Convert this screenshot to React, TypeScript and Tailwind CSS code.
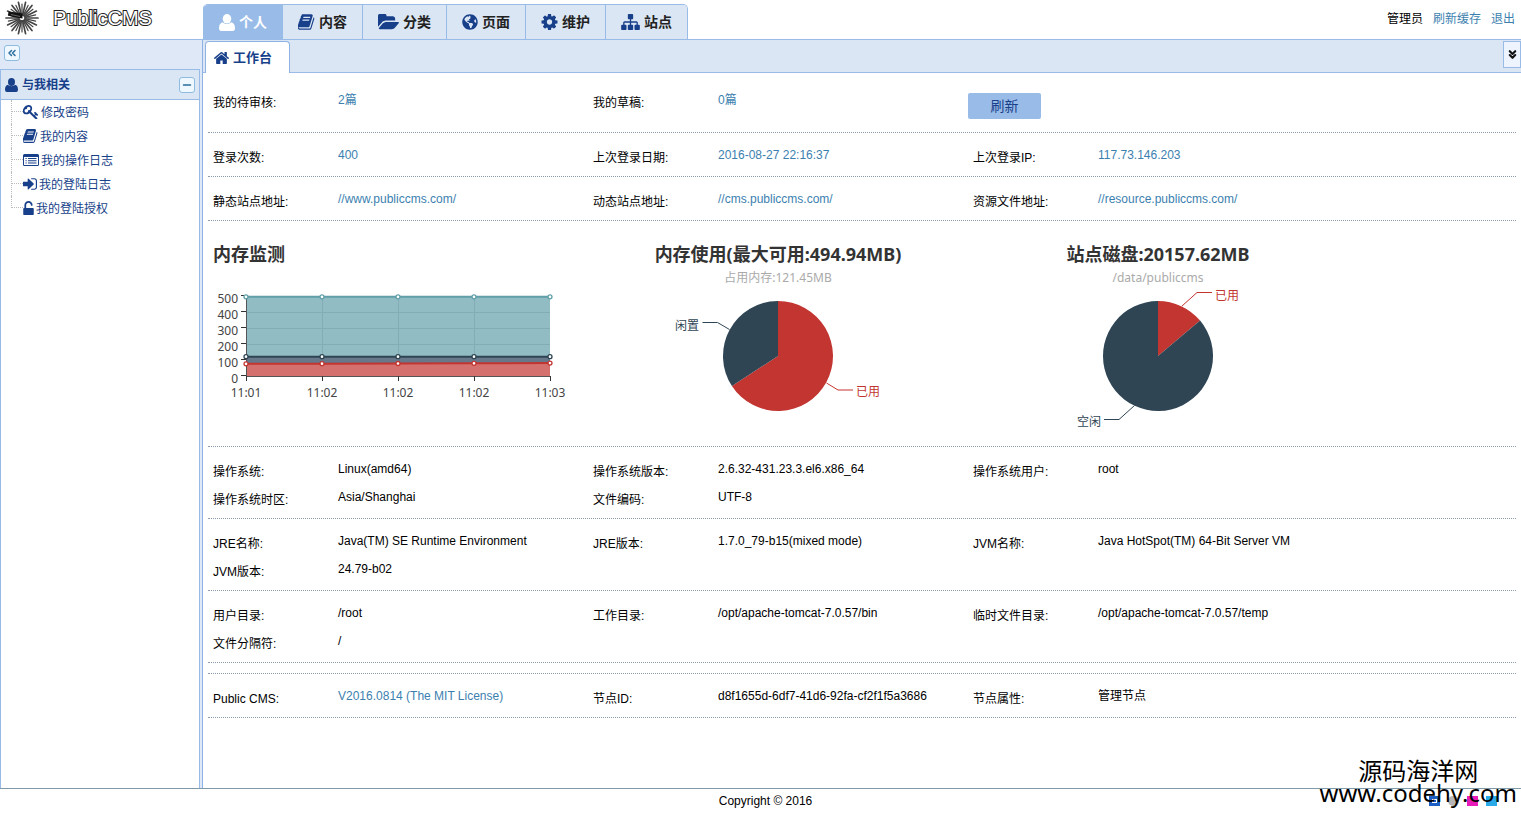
import type { ReactNode } from "react";
import { ChevronsDown, ChevronsLeft, Minus } from "lucide-react";
import { FaGlobeAmericas } from "react-icons/fa";
import clsx from "clsx";

type IconProps = { className?: string };

function Glyph({ box, className, children }: { box: string; className?: string; children: ReactNode }) {
  return (
    <svg viewBox={box} fill="currentColor" className={clsx("shrink-0", className)} aria-hidden="true">
      {children}
    </svg>
  );
}

const UserIcon = ({ className }: IconProps) => (
  <Glyph box="0 0 16 17" className={className}>
    <ellipse cx="8" cy="4.800" rx="4.300" ry="4.800" />
    <path d="M3.800 8.200C1.200 8.800 0 10.800 0 14.300Q0 17 2.300 17h11.400Q16 17 16 14.300C16 10.800 14.800 8.800 12.200 8.200 10.500 10.600 5.500 10.600 3.800 8.200z" />
  </Glyph>
);

const BookIcon = ({ className }: IconProps) => (
  <Glyph box="64 128 1664 1536" className={className}>
    <path d="M1639 478q40 57 18 129l-275 906q-19 64-76.500 107.500t-122.500 43.500h-923q-77 0-148.500-53.500t-99.500-131.500q-24-67-2-127 0-4 3-27t4-37q1-8-3-21.500t-3-19.500q2-11 8-21t16.500-23.500 16.500-23.500q23-38 45-91.500t30-91.500q3-10 .5-30t-.5-28q3-11 17-28t17-23q21-36 42-92t25-90q1-9-2.500-32t.5-28q4-13 22-30.500t22-22.500q19-26 42.500-84.500t27.500-96.500q1-8-3-25.500t-2-26.500q2-8 9-18t18-23 17-21q8-12 16.500-30.500t15-35 16-36 19.500-32 26.500-23.500 36-11.500 47.500 5.500l-1 3q38-9 51-9h761q74 0 114 56t18 130l-274 906q-36 119-71.500 153.500t-128.500 34.500h-869q-27 0-38 15-11 16-1 43 24 70 144 70h923q29 0 56-15.500t35-41.500l300-987q7-22 5-57 38 15 59 43zm-1064 2q-4 13 2 22.500t20 9.500h608q13 0 25.500-9.500t16.500-22.500l21-64q4-13-2-22.500t-20-9.500h-608q-13 0-25.500 9.500t-16.500 22.500zm-83 256q-4 13 2 22.500t20 9.500h608q13 0 25.500-9.500t16.500-22.500l21-64q4-13-2-22.500t-20-9.500h-608q-13 0-25.500 9.500t-16.500 22.500z" />
  </Glyph>
);

const FolderIcon = ({ className }: IconProps) => (
  <Glyph box="0 256 1880 1280" className={className}>
    <path d="M1879 952q0 31-31 66l-336 396q-43 51-120.500 86.500t-143.500 35.500h-1088q-34 0-60.500-13t-26.500-43q0-31 31-66l336-396q43-51 120.500-86.500t143.500-35.500h1088q34 0 60.500 13t26.500 43zm-343-344v160h-832q-94 0-197 47.500t-164 119.500l-337 396-5 6q0-4-.5-12.500t-.5-12.500v-960q0-92 66-158t158-66h320q92 0 158 66t66 158v32h544q92 0 158 66t66 158z" />
  </Glyph>
);

const GearIcon = ({ className }: IconProps) => (
  <Glyph box="128 128 1536 1536" className={className}>
    <path d="M1152 896q0-106-75-181t-181-75-181 75-75 181 75 181 181 75 181-75 75-181zm512-109v222q0 12-8 23t-20 13l-185 28q-19 54-39 91 35 50 107 138 10 12 10 25t-9 23q-27 37-99 108t-94 71q-12 0-26-9l-138-108q-44 23-91 38-16 136-29 186-7 28-36 28h-222q-14 0-24.500-8.500t-11.500-21.500l-28-184q-49-16-90-37l-141 107q-10 9-25 9-14 0-25-11-126-114-165-168-7-10-7-23 0-12 8-23 15-21 51-66.500t54-70.500q-27-50-41-99l-183-27q-13-2-21-12.500t-8-23.500v-222q0-12 8-23t19-13l186-28q14-46 39-92-40-57-107-138-10-12-10-24 0-10 9-23 26-36 98.500-107.500t94.500-71.500q13 0 26 10l138 107q44-23 91-38 16-136 29-186 7-28 36-28h222q14 0 24.500 8.500t11.500 21.500l28 184q49 16 90 37l142-107q9-9 24-9 13 0 25 10 129 119 165 170 7 8 7 22 0 12-8 23-15 21-51 66.500t-54 70.500q26 50 41 98l183 28q13 2 21 12.500t8 23.500z" />
  </Glyph>
);

const SitemapIcon = ({ className }: IconProps) => (
  <Glyph box="0 128 1792 1536" className={className}>
    <path d="M1792 1248v320q0 40-28 68t-68 28h-320q-40 0-68-28t-28-68v-320q0-40 28-68t68-28h96v-192h-512v192h96q40 0 68 28t28 68v320q0 40-28 68t-68 28h-320q-40 0-68-28t-28-68v-320q0-40 28-68t68-28h96v-192h-512v192h96q40 0 68 28t28 68v320q0 40-28 68t-68 28h-320q-40 0-68-28t-28-68v-320q0-40 28-68t68-28h96v-192q0-52 38-90t90-38h512v-192h-96q-40 0-68-28t-28-68v-320q0-40 28-68t68-28h320q40 0 68 28t28 68v320q0 40-28 68t-68 28h-96v192h512q52 0 90 38t38 90v192h96q40 0 68 28t28 68z" />
  </Glyph>
);

const HomeIcon = ({ className }: IconProps) => (
  <Glyph box="90 256 1612 1280" className={className}>
    <path d="M1472 992v480q0 26-19 45t-45 19h-384v-384h-256v384h-384q-26 0-45-19t-19-45v-480q0-1 .5-3t.5-3l575-474 575 474q1 2 1 6zm223-69l-62 74q-8 9-21 11h-3q-13 0-21-7l-692-577-692 577q-12 8-24 7-13-2-21-11l-62-74q-8-10-7-23.500t11-21.500l719-599q32-26 76-26t76 26l244 204v-195q0-14 9-23t23-9h192q14 0 23 9t9 23v408l219 182q10 8 11 21.500t-7 23.500z" />
  </Glyph>
);

const KeyIcon = ({ className }: IconProps) => (
  <Glyph box="64 128 1664 1536" className={className}>
    <path d="M832 512q0-80-56-136t-136-56-136 56-56 136q0 42 19 83-41-19-83-19-80 0-136 56t-56 136 56 136 136 56 136-56 56-136q0-42-19-83 41 19 83 19 80 0 136-56t56-136zm851 704q0 17-49 66t-66 49q-9 0-28.500-16t-36.500-33-38.500-40-24.500-26l-96 96 220 220q28 28 28 68 0 42-39 81t-81 39q-40 0-68-28l-671-671q-176 131-365 131-163 0-265.500-102.500t-102.500-265.500q0-160 95-313t248-248 313-95q163 0 265.500 102.500t102.500 265.500q0 189-131 365l355 355 96-96q-3-3-26-24.500t-40-38.500-33-36.500-16-28.500q0-17 49-66t66-49q13 0 23 10 6 6 46 44.500t82 79.500 86.500 86 73 78 28.500 41z" />
  </Glyph>
);

const ListIcon = ({ className }: IconProps) => (
  <Glyph box="0 0 16 12" className={className}>
    <path fillRule="evenodd" d="M1.500 0h13A1.500 1.500 0 0 1 16 1.500v9a1.500 1.500 0 0 1-1.500 1.500h-13A1.500 1.500 0 0 1 0 10.500v-9A1.500 1.500 0 0 1 1.500 0zM1 3v7.500q0 .5.500.5h13q.5 0 .5-.5V3z" />
    <path d="M2.500 4h1.200v1H2.500zM5 4h8.500v1H5zM2.500 6.300h1.200v1H2.500zM5 6.300h8.500v1H5zM2.500 8.600h1.200v1H2.500zM5 8.600h8.500v1H5z" />
  </Glyph>
);

const SignInIcon = ({ className }: IconProps) => (
  <Glyph box="128 256 1536 1280" className={className}>
    <path d="M1312 896q0 26-19 45l-544 544q-19 19-45 19t-45-19-19-45v-288h-448q-26 0-45-19t-19-45v-384q0-26 19-45t45-19h448v-288q0-26 19-45t45-19 45 19l544 544q19 19 19 45zm352-352v704q0 119-84.500 203.500t-203.500 84.500h-320q-13 0-22.500-9.500t-9.500-22.500q0-4-1-20t-.5-26.500 3-23.500 10-19.500 20.500-6.500h320q66 0 113-47t47-113v-704q0-66-47-113t-113-47h-312l-11.500-1-11.500-3-8-5.500-7-9-2-13.500q0-4-1-20t-.5-26.500 3-23.500 10-19.500 20.500-6.500h320q119 0 203.500 84.500t84.500 203.500z" />
  </Glyph>
);

const UnlockIcon = ({ className }: IconProps) => (
  <Glyph box="320 0 1152 1536" className={className}>
    <path d="M1376 768q40 0 68 28t28 68v576q0 40-28 68t-68 28h-960q-40 0-68-28t-28-68v-576q0-40 28-68t68-28h32v-320q0-185 131.500-316.500t316.500-131.500 316.500 131.500 131.500 316.500q0 26-19 45t-45 19h-64q-26 0-45-19t-19-45q0-106-75-181t-181-75-181 75-75 181v320h736z" />
  </Glyph>
);

const NAV_ITEMS = [
  { label: "个人", icon: UserIcon, size: "h-[17px] w-4", active: true },
  { label: "内容", icon: BookIcon, size: "h-4 w-[17px]" },
  { label: "分类", icon: FolderIcon, size: "h-4 w-[21px]" },
  { label: "页面", icon: FaGlobeAmericas, size: "h-4 w-4" },
  { label: "维护", icon: GearIcon, size: "h-4 w-[17px]" },
  { label: "站点", icon: SitemapIcon, size: "h-4 w-[19px]" },
];

const TREE_ITEMS = [
  { label: "修改密码", icon: KeyIcon, size: "h-[14px] w-4" },
  { label: "我的内容", icon: BookIcon, size: "h-[14px] w-[15px]" },
  { label: "我的操作日志", icon: ListIcon, size: "h-3 w-4" },
  { label: "我的登陆日志", icon: SignInIcon, size: "h-3 w-[14px]" },
  { label: "我的登陆授权", icon: UnlockIcon, size: "h-[14px] w-[11px]" },
];

// a ray is drawn between an inner and an outer radius, the outer one alternates
const RAYS = Array.from({ length: 28 }, (_, i) => {
  const a = (i * Math.PI) / 14;
  const r = i % 2 ? 14 : 16;
  return {
    x1: 17 + 3 * Math.cos(a),
    y1: 17 + 3 * Math.sin(a),
    x2: 17 + r * Math.cos(a),
    y2: 17 + r * Math.sin(a),
  };
});

function Logo() {
  return (
    <a href="#" className="flex w-[203px] shrink-0 items-center gap-[14px] pb-1 pl-[5px]">
      <svg viewBox="0 0 34 34" className="h-[34px] w-[34px]" aria-hidden="true">
        {RAYS.map((ray, i) => (
          <line key={i} {...ray} stroke="#444" strokeWidth={i % 2 ? 1.2 : 1.7} strokeLinecap="round" />
        ))}
        <path d="M3.500 10.500l4 0.500 10 1.500v5L8 16l-5-1.500z" fill="#111" />
        <path d="M6 13.500l9 2" stroke="#777" strokeWidth="0.8" />
      </svg>
      <span className="text-[20px] leading-6 text-white [-webkit-text-stroke:2px_#222] [paint-order:stroke_fill]">
        PublicCMS
      </span>
    </a>
  );
}

function Header() {
  return (
    <header className="flex h-[39px] justify-between">
      <div className="flex">
        <Logo />
        <nav className="mt-1 flex overflow-hidden rounded-t-[5px] border-t border-r border-[#99bbe8]">
          {NAV_ITEMS.map(({ label, icon: Icon, size, active }) => (
            <a
              key={label}
              href="#"
              className={clsx(
                "flex items-center gap-1 border-l border-[#99bbe8] px-[15px] text-[14px] font-bold",
                active ? "bg-[#99bbe8] text-white" : "bg-[#dae6f4] text-[#222]",
              )}
            >
              <Icon className={clsx(size, !active && "text-[#183f8a]")} />
              {label}
            </a>
          ))}
        </nav>
      </div>
      <div className="flex items-center gap-[10px] pr-[6px] pb-[2px]">
        <span>管理员</span>
        <a href="#" className="text-[#3c7faf]">刷新缓存</a>
        <a href="#" className="text-[#3c7faf]">退出</a>
      </div>
    </header>
  );
}

function ToolButton({ label, children }: { label: string; children: ReactNode }) {
  return (
    <button
      aria-label={label}
      className="flex h-4 w-4 items-center justify-center rounded-[3px] border border-[#8dbce0] bg-[#eff8ff] text-[#2a6c9c]"
    >
      {children}
    </button>
  );
}

function Sidebar() {
  return (
    <aside className="flex w-[202px] shrink-0 flex-col bg-[#dfe8f6] pr-[2px]">
      <div className="flex h-[29px] items-start pt-[5px] pl-1">
        <ToolButton label="收起">
          <ChevronsLeft className="h-3 w-3" strokeWidth={3} />
        </ToolButton>
      </div>
      <div className="flex flex-1 flex-col border-r border-[#99bbe8] bg-white">
        <h2 className="flex h-[31px] items-center justify-between border-y border-l border-[#99bbe8] bg-[#dae6f4] px-1 font-bold text-[#183f8a]">
          <span className="flex items-center gap-1">
            <UserIcon className="h-[14px] w-[13px]" />
            与我相关
          </span>
          <ToolButton label="折叠">
            <Minus className="h-3 w-3" strokeWidth={3} />
          </ToolButton>
        </h2>
        <ul className="flex-1 border-l border-[#99bbe8] pl-[10px] text-[#183f8a]">
          {TREE_ITEMS.map(({ label, icon: Icon, size }) => (
            <li key={label} className="group flex h-6 items-center">
              <span className="flex h-6 w-3 flex-col border-l border-dotted border-[#bbb] group-last:h-3 group-last:self-start">
                <span className="h-3 border-b border-dotted border-[#bbb]" />
              </span>
              <a href="#" className="flex items-center gap-[2px]">
                <Icon className={size} />
                <span className="pt-[2px]">{label}</span>
              </a>
            </li>
          ))}
        </ul>
      </div>
    </aside>
  );
}

type Entry = { label: string; value: string; link?: boolean };

function Field({ label, value, link }: Entry) {
  return (
    <div className="flex h-7 px-[5px]">
      <dt className="w-[125px] leading-[30px]">{label}:</dt>
      <dd className={clsx("leading-6", link && "text-[#3c7faf]")}>
        {link ? <a href="#">{value}</a> : value}
      </dd>
    </div>
  );
}

function Section({ items, className, children }: { items: Entry[]; className?: string; children?: ReactNode }) {
  return (
    <dl
      className={clsx(
        "grid grid-cols-[380px_380px_1fr] border-b border-dotted border-[#8a9bb0] pt-[10px] pb-[5px]",
        className,
      )}
    >
      {items.map((item) => (
        <Field key={item.label} {...item} />
      ))}
      {children}
    </dl>
  );
}

const SERIES = [
  { line: "#61a0a8", fill: "#91bcc3", values: [494.94, 494.94, 494.94, 494.94, 494.94] },
  { line: "#2f4554", fill: "#66788a", values: [121, 121, 121, 121, 121] },
  { line: "#c23531", fill: "#d4716f", values: [76, 77, 78, 79, 81] },
];
const TIMES = ["11:01", "11:02", "11:02", "11:02", "11:03"];

const toX = (i: number) => 33 + i * 76;
const toY = (v: number) => 88 - v * 0.16;

function MemoryChart() {
  return (
    <svg viewBox="0 0 370 148" className="h-[148px] w-[370px] overflow-visible font-['Noto_Sans'] text-[12px]">
      {SERIES.map(({ fill, values }) => (
        <polygon
          key={fill}
          fill={fill}
          points={`${toX(0)},88 ${values.map((v, i) => `${toX(i)},${toY(v)}`).join(" ")} ${toX(4)},88`}
        />
      ))}
      {[200, 300, 400].map((v) => (
        <line key={v} x1="33" x2="337" y1={toY(v) + 0.5} y2={toY(v) + 0.5} stroke="#83adb5" />
      ))}
      {[1, 2, 3].map((i) => (
        <line key={i} x1={toX(i) + 0.5} x2={toX(i) + 0.5} y1="9" y2="68" stroke="#83adb5" />
      ))}
      <path d="M33.500 8v80.500H337" fill="none" stroke="#555" />
      {[0, 100, 200, 300, 400, 500].map((v) => (
        <g key={v}>
          <line x1="28" x2="33" y1={toY(v) - 0.5} y2={toY(v) - 0.5} stroke="#333" />
          <text x="25" y={toY(v) + 7} textAnchor="end" fill="#444">{v}</text>
        </g>
      ))}
      {TIMES.map((t, i) => (
        <g key={i}>
          <line x1={toX(i) + 0.5} x2={toX(i) + 0.5} y1="88" y2="93" stroke="#333" />
          <text x={toX(i)} y="109" textAnchor="middle" fill="#444">{t}</text>
        </g>
      ))}
      {SERIES.map(({ line, values }) => (
        <g key={line} stroke={line}>
          <polyline fill="none" strokeWidth="2" points={values.map((v, i) => `${toX(i)},${toY(v)}`).join(" ")} />
          {values.map((v, i) => (
            <circle key={i} cx={toX(i)} cy={toY(v)} r="2" fill="#fff" strokeWidth="1.3" />
          ))}
        </g>
      ))}
    </svg>
  );
}

type Slice = { name: string; color: string; path: string; guide: string; x: number; y: number };

const HEAP: Slice[] = [
  { name: "已用", color: "#c23531", path: "M185 68V13A55 55 0 1 1 138.900 98z", guide: "M233.500 95l11.500 7h15", x: 263, y: 108 },
  { name: "闲置", color: "#2f4554", path: "M185 68L138.900 98A55 55 0 0 1 185 13z", guide: "M136.500 41.500l-12-7h-15", x: 82, y: 42 },
];
const DISK: Slice[] = [
  { name: "已用", color: "#c23531", path: "M185 68V13A55 55 0 0 1 227.100 32.600z", guide: "M209 18l15-13.500h15", x: 242, y: 12 },
  { name: "空闲", color: "#2f4554", path: "M185 68L227.100 32.600A55 55 0 1 1 185 13z", guide: "M161.500 117.500l-15.500 14h-15", x: 104, y: 138 },
];

function PieChart({ slices }: { slices: Slice[] }) {
  return (
    <svg viewBox="0 0 370 148" className="h-[148px] w-[370px] text-[12px]">
      {slices.map(({ name, color, path, guide, x, y }) => (
        <g key={name}>
          <path d={path} fill={color} />
          <path d={guide} fill="none" stroke={color} />
          <text x={x} y={y} fill={color}>{name}</text>
        </g>
      ))}
    </svg>
  );
}

function ChartPanel({ title, subtitle, children }: { title: string; subtitle?: string; children: ReactNode }) {
  return (
    <figure className="w-[380px] px-[5px] pt-5">
      <figcaption className={clsx("h-[47px] font-['Noto_Sans','Noto_Sans_CJK_SC',sans-serif]", subtitle && "text-center")}>
        <h3 className="text-[18px] leading-[26px] font-bold text-[#333]">{title}</h3>
        {subtitle && <p className="leading-[22px] text-[#aaa]">{subtitle}</p>}
      </figcaption>
      {children}
    </figure>
  );
}

function Workbench() {
  return (
    <main className="flex min-w-0 flex-1 flex-col border-l border-[#8db2e3]">
      <div className="flex h-[33px] items-start justify-between border-b border-[#99bbe8] bg-[#dae6f4] pl-[2px]">
        <button className="mt-px flex h-8 w-[85px] items-center gap-1 self-start rounded-t-[4px] border border-b-0 border-[#8db2e3] bg-white pl-2 font-bold text-[#183f8a] shadow-[0_1px_0_#fff]">
          <HomeIcon className="h-3 w-[15px]" />
          <span className="text-[13px]">工作台</span>
        </button>
        <button
          aria-label="更多标签"
          className="mt-px flex h-[27px] w-[18px] items-center justify-center border border-[#99bbe8] bg-[#edf4fd] text-[#111]"
        >
          <ChevronsDown className="h-[13px] w-[13px]" strokeWidth={4} />
        </button>
      </div>
      <div className="flex-1 p-[5px]">
        <Section
          items={[
            { label: "我的待审核", value: "2篇", link: true },
            { label: "我的草稿", value: "0篇", link: true },
          ]}
        >
          <div className="pt-[5px] pb-2">
            <button className="block h-[26px] w-[73px] rounded-[2px] bg-[#99bbe8] text-[14px] text-[#183f8a]">刷新</button>
          </div>
        </Section>
        <Section
          items={[
            { label: "登录次数", value: "400", link: true },
            { label: "上次登录日期", value: "2016-08-27 22:16:37", link: true },
            { label: "上次登录IP", value: "117.73.146.203", link: true },
          ]}
        />
        <Section
          items={[
            { label: "静态站点地址", value: "//www.publiccms.com/", link: true },
            { label: "动态站点地址", value: "//cms.publiccms.com/", link: true },
            { label: "资源文件地址", value: "//resource.publiccms.com/", link: true },
          ]}
        />
        <div className="flex h-[226px] border-b border-dotted border-[#8a9bb0]">
          <ChartPanel title="内存监测">
            <MemoryChart />
          </ChartPanel>
          <ChartPanel title="内存使用(最大可用:494.94MB)" subtitle="占用内存:121.45MB">
            <PieChart slices={HEAP} />
          </ChartPanel>
          <ChartPanel title="站点磁盘:20157.62MB" subtitle="/data/publiccms">
            <PieChart slices={DISK} />
          </ChartPanel>
        </div>
        <Section
          items={[
            { label: "操作系统", value: "Linux(amd64)" },
            { label: "操作系统版本", value: "2.6.32-431.23.3.el6.x86_64" },
            { label: "操作系统用户", value: "root" },
            { label: "操作系统时区", value: "Asia/Shanghai" },
            { label: "文件编码", value: "UTF-8" },
          ]}
        />
        <Section
          items={[
            { label: "JRE名称", value: "Java(TM) SE Runtime Environment" },
            { label: "JRE版本", value: "1.7.0_79-b15(mixed mode)" },
            { label: "JVM名称", value: "Java HotSpot(TM) 64-Bit Server VM" },
            { label: "JVM版本", value: "24.79-b02" },
          ]}
        />
        <Section
          items={[
            { label: "用户目录", value: "/root" },
            { label: "工作目录", value: "/opt/apache-tomcat-7.0.57/bin" },
            { label: "临时文件目录", value: "/opt/apache-tomcat-7.0.57/temp" },
            { label: "文件分隔符", value: "/" },
          ]}
        />
        <Section
          className="mt-[10px] border-t"
          items={[
            { label: "Public CMS", value: "V2016.0814 (The MIT License)", link: true },
            { label: "节点ID", value: "d8f1655d-6df7-41d6-92fa-cf2f1f5a3686" },
            { label: "节点属性", value: "管理节点" },
          ]}
        />
      </div>
    </main>
  );
}

function Footer() {
  return (
    <footer className="relative flex h-[26px] justify-center border-t border-[#7f9aa6] pt-1 pl-[10px]">
      <p>Copyright © 2016</p>
      <div className="absolute right-6 bottom-2 flex gap-2">
        <span className="flex h-[10px] w-[11px] items-center justify-center bg-[#1d5fc4]">
          <span className="h-1 w-[5px] border border-white" />
        </span>
        <span className="h-[10px] w-[11px] rounded-full bg-[#b5b5b5]" />
        <span className="h-[10px] w-[11px] bg-[#e81cb8]" />
        <span className="h-[10px] w-[11px] bg-[#29a9e8]" />
      </div>
      <div className="absolute right-1 bottom-[10px] text-center font-['Noto_Sans','Noto_Sans_CJK_SC',sans-serif] text-[24px] leading-[22px] text-black">
        <p>源码海洋网</p>
        <p>www.codehy.com</p>
      </div>
    </footer>
  );
}

export default function App() {
  return (
    <div className="flex min-h-screen flex-col bg-white font-['Liberation_Sans','Noto_Sans_CJK_SC',sans-serif] text-[12px] leading-4 text-black">
      <Header />
      <div className="flex flex-1 border-t border-[#99bbe8]">
        <Sidebar />
        <Workbench />
      </div>
      <Footer />
    </div>
  );
}
